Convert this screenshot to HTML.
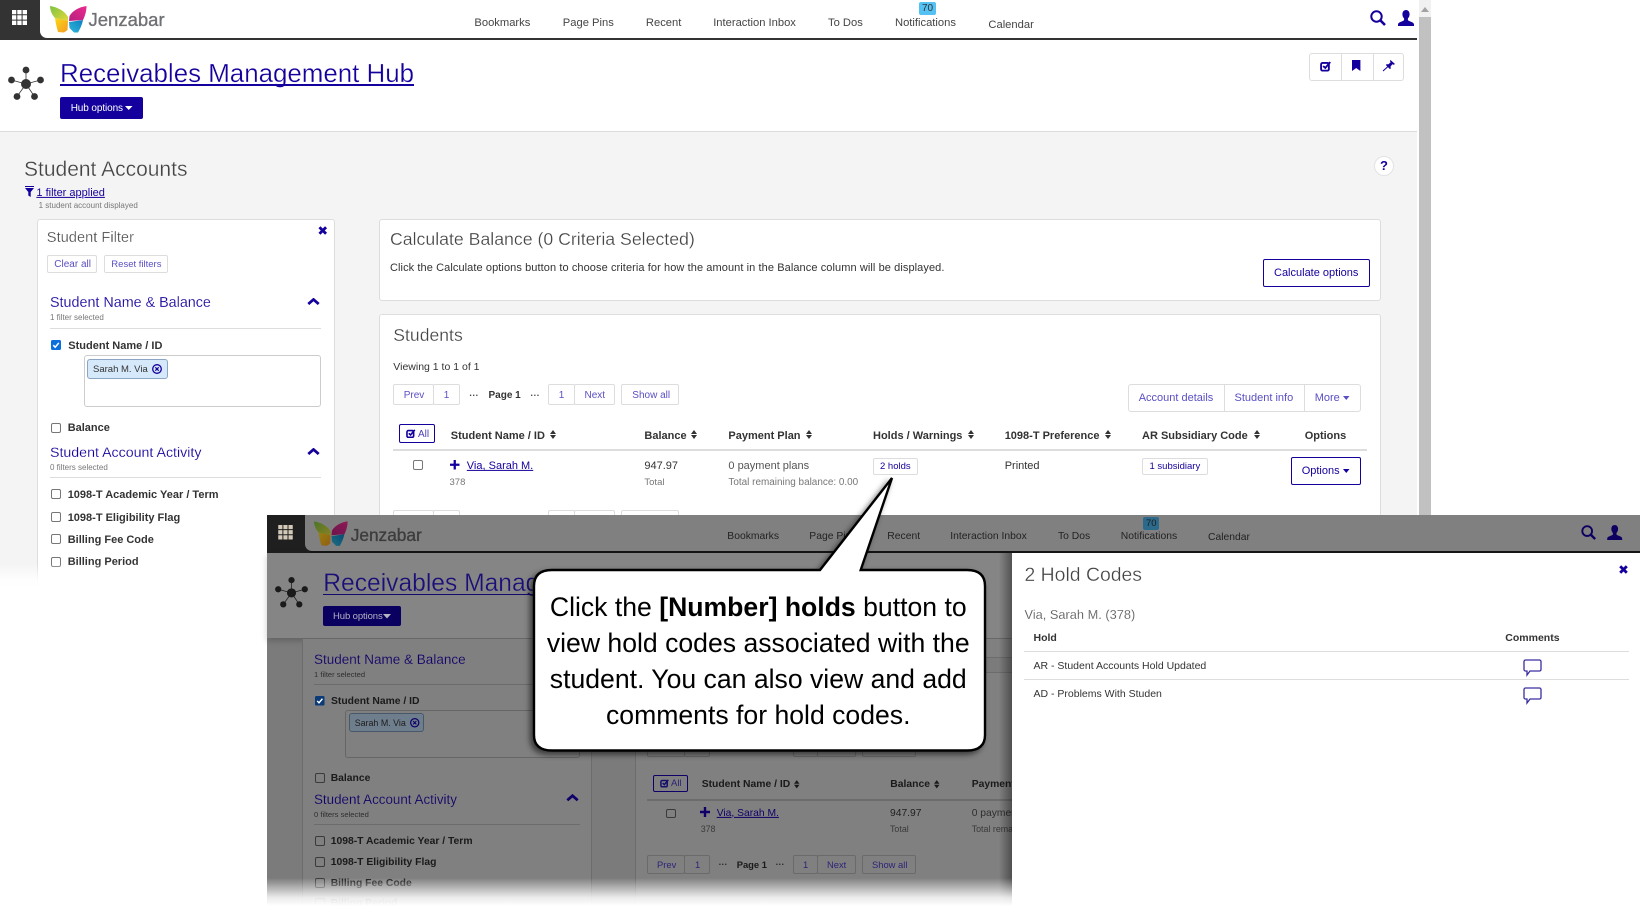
<!DOCTYPE html>
<html><head><meta charset="utf-8"><title>Receivables Management Hub</title>
<style>
html,body{margin:0;padding:0;background:#fff;width:1640px;height:910px;overflow:hidden;font-family:"Liberation Sans",sans-serif}
.t{position:absolute;white-space:nowrap;line-height:0;transform:translateY(.9px)}
.b{position:absolute;box-sizing:border-box}
svg.i{position:absolute;overflow:visible}
.nv{color:#14009c}
.li{color:#5a4fc4}
.bo{font-weight:bold;color:#333;font-size:11px}
.btn{background:#fff;border:1px solid #ddd;border-radius:2px}
.cb{width:10px;height:10px;background:#fff;border:1px solid #777;border-radius:2px}
.d .cb{background:#808080;border-color:#3a3a3a}
.d .btn{background:#808080;border:1px solid #6a6a6a}
.d .bo{color:#1a1a1a;font-size:10.35px}
.d .li{color:#2d2478}
.d .nv{color:#0e0068}
</style></head>
<body>
<svg width="0" height="0" style="position:absolute">
<defs>
<symbol id="grid" viewBox="0 0 15 15"><path d="M0 0h4.300v4.300H0zM5.300 0h4.300v4.300H5.300zM10.600 0h4.400v4.300h-4.400zM0 5.300h4.300v4.300H0zM5.300 5.300h4.300v4.300H5.300zM10.600 5.300h4.400v4.300h-4.400zM0 10.600h4.300V15H0zM5.300 10.600h4.300V15H5.300zM10.600 10.600h4.400V15h-4.400z" fill="currentColor"/></symbol>
<linearGradient id="g1" x1="0" y1="0" x2="1" y2="1"><stop offset="0" stop-color="#7cc242"/><stop offset="1" stop-color="#e3d93a"/></linearGradient>
<linearGradient id="g2" x1="0" y1="0" x2="1" y2="1"><stop offset="0" stop-color="#fbd817"/><stop offset="1" stop-color="#f59a23"/></linearGradient>
<linearGradient id="g3" x1="1" y1="0" x2="0" y2="1"><stop offset="0" stop-color="#ec2a8f"/><stop offset="1" stop-color="#b5207f"/></linearGradient>
<linearGradient id="g4" x1="1" y1="0" x2="0" y2="1"><stop offset="0" stop-color="#0d7fc2"/><stop offset="1" stop-color="#30b7d8"/></linearGradient>
<symbol id="logo" viewBox="0 0 38 27">
<path d="M0 0C7 1 15 5 18 11L18 15L5 12C2 9 0 4 0 0Z" fill="url(#g1)"/>
<path d="M5 12L18 15L17.500 24L14 26.500L8 26C6.500 21 5.500 16 5 12Z" fill="url(#g2)"/>
<path d="M36.500 0C36.500 5 35 10 33 14L19 15L19.500 10C23 4 30 1 36.500 0Z" fill="url(#g3)"/>
<path d="M19 16L33 14C32 19 30 23 28 26.500L24 26.500L19.500 22Z" fill="url(#g4)"/>
</symbol>
<symbol id="hub" viewBox="0 0 36 34">
<g stroke="currentColor" stroke-width=".8" fill="none"><path d="M18 18V4M18 18L3.500 14M18 18L32.500 14M18 18L9 30.500M18 18L26.500 30.500"/></g>
<g fill="currentColor"><circle cx="18" cy="18" r="5"/><circle cx="18" cy="4" r="3.400"/><circle cx="3.500" cy="14" r="3.400"/><circle cx="32.500" cy="14" r="3.400"/><circle cx="9" cy="30.500" r="3.400"/><circle cx="26.500" cy="30.500" r="3.400"/></g>
</symbol>
<symbol id="search" viewBox="0 0 16 16"><circle cx="6.500" cy="6.500" r="5.200" fill="none" stroke="currentColor" stroke-width="2"/><path d="M10.300 10.300L15 15" stroke="currentColor" stroke-width="2.600" fill="none"/></symbol>
<symbol id="user" viewBox="0 0 16 16"><path d="M8 0c2.300 0 3.600 1.900 3.600 4.300 0 1.800-.8 3.300-1.700 4.200v1.400c0 .7 1.200 1.100 2.700 1.700 1.700.7 3.400 1.300 3.400 3v1.400H0v-1.400c0-1.700 1.700-2.300 3.400-3 1.500-.6 2.700-1 2.700-1.700V8.500c-.9-.9-1.700-2.400-1.700-4.200C4.400 1.900 5.700 0 8 0z" fill="currentColor"/></symbol>
<symbol id="sort" viewBox="0 0 6 9"><path d="M3 0L6 4H0ZM3 9L0 5H6Z" fill="currentColor"/></symbol>
<symbol id="chev" viewBox="0 0 13 7"><path d="M1.300 6L6.500 1.500L11.700 6" fill="none" stroke="currentColor" stroke-width="2.800"/></symbol>
<symbol id="x" viewBox="0 0 9 9"><path d="M1.200 1.200L7.800 7.800M7.800 1.200L1.200 7.800" fill="none" stroke="currentColor" stroke-width="2.800"/></symbol>
<symbol id="plus" viewBox="0 0 10 10"><path d="M5 0V10M0 5H10" stroke="currentColor" stroke-width="2.400" fill="none"/></symbol>
<symbol id="chk" viewBox="0 0 10 10"><rect x=".8" y="1.800" width="7.400" height="7.400" rx="1.500" fill="none" stroke="currentColor" stroke-width="1.800"/><path d="M2.800 4.800L4.800 6.600L9.500 1" fill="none" stroke="currentColor" stroke-width="1.800"/></symbol>
<symbol id="cic" viewBox="0 0 10 10"><circle cx="5" cy="5" r="4.300" fill="none" stroke="currentColor" stroke-width="1.300"/><path d="M3.300 3.300L6.700 6.700M6.700 3.300L3.300 6.700" stroke="currentColor" stroke-width="1.200"/></symbol>
<symbol id="tick" viewBox="0 0 10 10"><rect width="10" height="10" rx="1.500" fill="currentColor"/><path d="M2.300 5.200L4.200 7.200L7.800 2.900" stroke="#fff" stroke-width="1.500" fill="none"/></symbol>
</defs>
</svg>

<!-- BASE PAGE -->
<div class="b" style="left:0;top:0;width:1417px;height:600px;background:#f4f4f4"></div>
<div class="b" style="left:0;top:40px;width:1417px;height:92px;background:#fff;border-bottom:1px solid #dcdcdc"></div>
<div class="b" style="left:0;top:0;width:1417px;height:40px;background:#333"></div>
<div class="b" style="left:40px;top:0;width:1377px;height:38px;background:#fff;border-bottom-left-radius:7px"></div>
<svg class="i" style="left:12px;top:10px;color:#fff" width="15" height="15"><use href="#grid"/></svg>
<svg class="i" style="left:50px;top:6px" width="38" height="27"><use href="#logo"/></svg>
<span class="t" style="left:88.500px;top:19px;font-size:18.500px;color:#6f7073;-webkit-text-stroke:.35px #6f7073">Jenzabar</span>
<span class="t" style="left:474.400px;top:22px;font-size:11.200px;color:#444">Bookmarks</span>
<span class="t" style="left:562.800px;top:22px;font-size:11.200px;color:#444">Page Pins</span>
<span class="t" style="left:645.900px;top:22px;font-size:11.200px;color:#444">Recent</span>
<span class="t" style="left:713.200px;top:22px;font-size:11.200px;color:#444">Interaction Inbox</span>
<span class="t" style="left:828px;top:22px;font-size:11.200px;color:#444">To Dos</span>
<span class="t" style="left:895px;top:22px;font-size:11.200px;color:#444">Notifications</span>
<span class="t" style="left:988.400px;top:24px;font-size:11.200px;color:#444">Calendar</span>
<div class="b" style="left:919px;top:2px;width:17px;height:13px;background:#55c1f2;border-radius:2px"></div>
<span class="t" style="left:922px;top:8px;font-size:10px;color:#333">70</span>
<svg class="i nv" style="left:1370px;top:10px" width="16" height="16"><use href="#search"/></svg>
<svg class="i nv" style="left:1398px;top:10px" width="16" height="16"><use href="#user"/></svg>
<!-- scrollbar -->
<div class="b" style="left:1417px;top:0;width:2px;height:515px;background:#fff"></div>
<div class="b" style="left:1419px;top:0;width:12px;height:515px;background:#c1c1c1"></div>
<div class="b" style="left:1419px;top:0;width:12px;height:17px;background:#f1f1f1"></div>
<svg class="i" style="left:1421px;top:7px" width="8" height="5"><path d="M4 0L8 5H0Z" fill="#a3a3a3"/></svg>

<svg class="i" style="left:8px;top:66px;color:#333" width="36" height="34"><use href="#hub"/></svg>
<span class="t nv" style="left:60px;top:73px;font-size:25.900px;-webkit-text-stroke:.3px #fff">Receivables Management Hub</span>
<div class="b" style="left:60px;top:84.300px;width:353.600px;height:1.500px;background:#14009c"></div>
<div class="b" style="left:60px;top:97px;width:83px;height:22px;background:#14009c;border-radius:2px"></div>
<span class="t" style="left:70.700px;top:108px;font-size:10px;color:#fff;letter-spacing:-.1px">Hub options</span>
<svg class="i" style="left:125px;top:105.500px" width="7.500" height="4"><path d="M0 0H7.500L3.750 4Z" fill="#fff"/></svg>
<!-- action group -->
<div class="b" style="left:1309.400px;top:53px;width:94.200px;height:28px;background:#fff;border:1px solid #ddd;border-radius:3px"></div>
<div class="b" style="left:1340.800px;top:53px;width:1px;height:28px;background:#ddd"></div>
<div class="b" style="left:1372.600px;top:53px;width:1px;height:28px;background:#ddd"></div>
<svg class="i nv" style="left:1319.500px;top:61px" width="11" height="10.500"><use href="#chk"/></svg>
<svg class="i nv" style="left:1352.300px;top:60px" width="8.400" height="11"><path d="M0 0H8.400V11L4.200 8L0 11Z" fill="currentColor"/></svg>
<svg class="i nv" style="left:1382.500px;top:60.300px" width="12" height="11"><path d="M7.500 0L12 4L10.800 4.800L9.500 4.200L7.500 6.500L7.800 8.500L6.800 9L2.800 5L3.500 4.200L5.500 4.300L7.600 2.200L6.900 1Z" fill="currentColor"/><path d="M0 11L5 6.500" stroke="currentColor" stroke-width="1" fill="none"/></svg>

<span class="t" style="left:24px;top:168.700px;font-size:21px;color:#444;-webkit-text-stroke:.3px #f4f4f4">Student Accounts</span>
<svg class="i nv" style="left:25px;top:186px" width="9" height="11"><path d="M0 0H9V1H0ZM0 2H9L5.700 6V11L3.300 9.500V6Z" fill="currentColor"/></svg>
<span class="t nv" style="left:36.400px;top:192px;font-size:11px;text-decoration:underline">1 filter applied</span>
<span class="t" style="left:38.600px;top:205px;font-size:8px;color:#777">1 student account displayed</span>
<div class="b" style="left:1373.500px;top:156px;width:20px;height:20px;background:#fff;border:1px solid #e3e3e3;border-radius:50%"></div>
<span class="t nv" style="left:1380px;top:165px;font-size:13px;font-weight:bold">?</span>

<!-- Student filter card -->
<div class="b" style="left:36.500px;top:218.700px;width:298px;height:380px;background:#fff;border:1px solid #ddd;border-radius:3px"></div>
<span class="t" style="left:46.800px;top:237px;font-size:14.660px;color:#444;-webkit-text-stroke:.25px #fff">Student Filter</span>
<svg class="i nv" style="left:317.500px;top:226px" width="9.500" height="9"><use href="#x"/></svg>
<div class="b btn" style="left:47px;top:255.300px;width:50px;height:17.500px"></div>
<span class="t li" style="left:54.300px;top:264px;font-size:10px">Clear all</span>
<div class="b btn" style="left:104px;top:255.300px;width:64px;height:17.500px"></div>
<span class="t li" style="left:111.300px;top:264px;font-size:9.500px">Reset filters</span>

<span class="t nv" style="left:50px;top:302px;font-size:14.340px;-webkit-text-stroke:.15px #fff">Student Name &amp; Balance</span>
<svg class="i nv" style="left:306.700px;top:298px" width="13" height="7"><use href="#chev"/></svg>
<span class="t" style="left:50px;top:317px;font-size:8px;color:#777">1 filter selected</span>
<div class="b" style="left:50px;top:328px;width:271px;height:1px;background:#ddd"></div>
<svg class="i" style="left:51px;top:340px;color:#0b6fdc" width="10" height="10"><use href="#tick"/></svg>
<span class="t bo" style="left:68.300px;top:345px">Student Name / ID</span>
<div class="b" style="left:84.300px;top:355.300px;width:236.400px;height:51.400px;background:#fff;border:1px solid #ccc;border-radius:3px"></div>
<div class="b" style="left:87.300px;top:359.300px;width:80.400px;height:19.400px;background:#d6e9fa;border:1px solid #8aa6c4;border-radius:3px"></div>
<span class="t" style="left:93px;top:368.500px;font-size:9.500px;color:#333">Sarah M. Via</span>
<svg class="i nv" style="left:152px;top:363.500px" width="10" height="10"><use href="#cic"/></svg>
<div class="b cb" style="left:51px;top:423px"></div>
<span class="t bo" style="left:67.700px;top:427px">Balance</span>
<span class="t nv" style="left:50px;top:452px;font-size:14.200px;-webkit-text-stroke:.15px #fff">Student Account Activity</span>
<svg class="i nv" style="left:306.700px;top:448px" width="13" height="7"><use href="#chev"/></svg>
<span class="t" style="left:50px;top:467.300px;font-size:8px;color:#777">0 filters selected</span>
<div class="b" style="left:50px;top:477px;width:271px;height:1px;background:#ddd"></div>
<div class="b cb" style="left:51px;top:489px"></div><span class="t bo" style="left:67.700px;top:494px">1098-T Academic Year / Term</span>
<div class="b cb" style="left:51px;top:512px"></div><span class="t bo" style="left:67.700px;top:517px">1098-T Eligibility Flag</span>
<div class="b cb" style="left:51px;top:534px"></div><span class="t bo" style="left:67.700px;top:539px">Billing Fee Code</span>
<div class="b cb" style="left:51px;top:556.500px"></div><span class="t bo" style="left:67.700px;top:561px">Billing Period</span>

<!-- Calculate card -->
<div class="b" style="left:379px;top:218.700px;width:1002px;height:82.300px;background:#fff;border:1px solid #ddd;border-radius:3px"></div>
<span class="t" style="left:390px;top:238px;font-size:17.700px;color:#444;-webkit-text-stroke:.25px #fff">Calculate Balance (0 Criteria Selected)</span>
<span class="t" style="left:390px;top:267.300px;font-size:11px;letter-spacing:.086px;color:#333">Click the Calculate options button to choose criteria for how the amount in the Balance column will be displayed.</span>
<div class="b" style="left:1263px;top:259.300px;width:107px;height:27.400px;background:#fff;border:1.500px solid #14009c;border-radius:2px"></div>
<span class="t nv" style="left:1274px;top:271.600px;font-size:11px">Calculate options</span>

<!-- Students card -->
<div class="b" style="left:379px;top:314px;width:1002px;height:260px;background:#fff;border:1px solid #ddd;border-radius:3px"></div>
<span class="t" style="left:393.300px;top:334px;font-size:17.600px;color:#444;-webkit-text-stroke:.25px #fff">Students</span>
<span class="t" style="left:393.300px;top:366.300px;font-size:10.500px;color:#333">Viewing 1 to 1 of 1</span>
<div class="b btn" style="left:393px;top:384px;width:41px;height:21px"></div><span class="t li" style="left:403.700px;top:395px;font-size:10px">Prev</span>
<div class="b btn" style="left:433px;top:384px;width:27px;height:21px"></div><span class="t li" style="left:443.700px;top:395px;font-size:10px">1</span>
<span class="t" style="left:469.600px;top:395px;font-size:5.500px;color:#333;letter-spacing:1.200px">•••</span>
<span class="t" style="left:488.500px;top:395px;font-size:10px;font-weight:bold;color:#333">Page 1</span>
<span class="t" style="left:530.700px;top:395px;font-size:5.500px;color:#333;letter-spacing:1.200px">•••</span>
<div class="b btn" style="left:548px;top:384px;width:27px;height:21px"></div><span class="t li" style="left:558.800px;top:395px;font-size:10px">1</span>
<div class="b btn" style="left:574px;top:384px;width:41px;height:21px"></div><span class="t li" style="left:584.500px;top:395px;font-size:10px">Next</span>
<div class="b btn" style="left:621px;top:384px;width:58px;height:21px"></div><span class="t li" style="left:632.300px;top:395px;font-size:10px">Show all</span>

<div class="b btn" style="left:1128px;top:384px;width:97px;height:27.700px;border-radius:3px 0 0 3px"></div>
<div class="b btn" style="left:1224px;top:384px;width:81px;height:27.700px;border-radius:0"></div>
<div class="b btn" style="left:1304px;top:384px;width:57px;height:27.700px;border-radius:0 3px 3px 0"></div>
<span class="t li" style="left:1138.700px;top:396.500px;font-size:11px">Account details</span>
<span class="t li" style="left:1234.500px;top:396.500px;font-size:11px">Student info</span>
<span class="t li" style="left:1314.700px;top:396.500px;font-size:11px">More</span>
<svg class="i" style="left:1343px;top:395.500px" width="6.500" height="4"><path d="M0 0H6.500L3.250 4Z" fill="#5a4fc4"/></svg>

<div class="b" style="left:399.300px;top:424.300px;width:36.200px;height:18.400px;background:#fff;border:1.500px solid #14009c;border-radius:2px"></div>
<svg class="i nv" style="left:406px;top:429px" width="9.500" height="9"><use href="#chk"/></svg>
<span class="t" style="left:418px;top:433.500px;font-size:10px;color:#4a3fb4">All</span>
<span class="t bo" style="left:450.800px;top:435.300px">Student Name / ID</span><svg class="i" style="left:549.600px;top:430px;color:#333" width="6" height="9"><use href="#sort"/></svg>
<span class="t bo" style="left:644.400px;top:435.300px">Balance</span><svg class="i" style="left:691.400px;top:430px;color:#333" width="6" height="9"><use href="#sort"/></svg>
<span class="t bo" style="left:728.400px;top:435.300px">Payment Plan</span><svg class="i" style="left:806px;top:430px;color:#333" width="6" height="9"><use href="#sort"/></svg>
<span class="t bo" style="left:873px;top:435.300px">Holds / Warnings</span><svg class="i" style="left:968px;top:430px;color:#333" width="6" height="9"><use href="#sort"/></svg>
<span class="t bo" style="left:1004.700px;top:435.300px">1098-T Preference</span><svg class="i" style="left:1105px;top:430px;color:#333" width="6" height="9"><use href="#sort"/></svg>
<span class="t bo" style="left:1142px;top:435.300px">AR Subsidiary Code</span><svg class="i" style="left:1253.600px;top:430px;color:#333" width="6" height="9"><use href="#sort"/></svg>
<span class="t bo" style="left:1304.700px;top:435.300px">Options</span>
<div class="b" style="left:393.300px;top:449px;width:973.500px;height:2px;background:#ddd"></div>

<div class="b cb" style="left:413px;top:460px"></div>
<svg class="i nv" style="left:449.500px;top:459.500px" width="9.500" height="9.500"><use href="#plus"/></svg>
<span class="t nv" style="left:466.800px;top:465.300px;font-size:11px;text-decoration:underline">Via, Sarah M.</span>
<span class="t" style="left:449.500px;top:481.700px;font-size:9.500px;color:#777">378</span>
<span class="t" style="left:644.400px;top:465.300px;font-size:11px;color:#333">947.97</span>
<span class="t" style="left:644.400px;top:481.700px;font-size:9.500px;color:#777">Total</span>
<span class="t" style="left:728.400px;top:465.300px;font-size:11px;color:#555">0 payment plans</span>
<span class="t" style="left:728.400px;top:481.700px;font-size:9.950px;color:#777">Total remaining balance: 0.00</span>
<div class="b btn" style="left:873px;top:457.700px;width:44.600px;height:17px"></div>
<span class="t nv" style="left:880px;top:465.500px;font-size:9.500px">2 holds</span>
<span class="t" style="left:1004.700px;top:465.300px;font-size:11px;color:#333">Printed</span>
<div class="b btn" style="left:1142px;top:457.700px;width:66px;height:17px"></div>
<span class="t nv" style="left:1149.500px;top:465.500px;font-size:9.500px">1 subsidiary</span>
<div class="b" style="left:1291.300px;top:457.300px;width:69.400px;height:27.400px;background:#fff;border:1.500px solid #14009c;border-radius:2px"></div>
<span class="t nv" style="left:1301.700px;top:470.300px;font-size:11px">Options</span>
<svg class="i nv" style="left:1343px;top:468.500px" width="6.500" height="4"><path d="M0 0H6.500L3.250 4Z" fill="currentColor"/></svg>
<div class="b btn" style="left:393px;top:509.700px;width:41px;height:21px"></div>
<div class="b btn" style="left:433px;top:509.700px;width:27px;height:21px"></div>
<div class="b btn" style="left:548px;top:509.700px;width:27px;height:21px"></div>
<div class="b btn" style="left:574px;top:509.700px;width:41px;height:21px"></div>
<div class="b btn" style="left:621px;top:509.700px;width:58px;height:21px"></div>

<!-- fade base page -->
<div class="b" style="left:0;top:563px;width:267px;height:30px;background:linear-gradient(to bottom,rgba(255,255,255,0),rgba(255,255,255,.95) 60%,#fff)"></div>
<div class="b" style="left:0;top:593px;width:267px;height:317px;background:#fff"></div>
<div class="b" style="left:267px;top:515px;width:1373px;height:395px;background:#fff"></div>

<!-- DARK OVERLAY SCREENSHOT -->
<div class="d">
<div class="b" style="left:267px;top:515px;width:745px;height:395px;background:#7b7b7b"></div>
<div class="b" style="left:267px;top:515px;width:48px;height:38px;background:#1f1f1f"></div>
<div class="b" style="left:305px;top:515px;width:1335px;height:36.300px;background:#808080;border-bottom-left-radius:7px"></div>
<div class="b" style="left:310px;top:551.300px;width:1330px;height:1.800px;background:#151515"></div>
<svg class="i" style="left:278px;top:525px;color:#d2c9b8" width="15" height="14.500"><use href="#grid"/></svg>
<svg class="i" style="left:314px;top:521px;filter:brightness(.6)" width="35" height="25.700"><use href="#logo"/></svg>
<span class="t" style="left:350.700px;top:533.500px;font-size:17.300px;color:#3d3d3d;-webkit-text-stroke:.35px #3d3d3d">Jenzabar</span>
<span class="t" style="left:727.300px;top:535.500px;font-size:10.350px;color:#222">Bookmarks</span>
<span class="t" style="left:809.300px;top:535.500px;font-size:10.350px;color:#222">Page Pins</span>
<span class="t" style="left:887.300px;top:535.500px;font-size:10.350px;color:#222">Recent</span>
<span class="t" style="left:950.300px;top:535.500px;font-size:10.350px;color:#222">Interaction Inbox</span>
<span class="t" style="left:1058px;top:535.500px;font-size:10.350px;color:#222">To Dos</span>
<span class="t" style="left:1120.800px;top:535.500px;font-size:10.350px;color:#222">Notifications</span>
<span class="t" style="left:1208px;top:536.800px;font-size:10.350px;color:#222">Calendar</span>
<div class="b" style="left:1142.900px;top:517.300px;width:16.100px;height:12.700px;background:#2c6a8c;border-radius:2px"></div>
<span class="t" style="left:1146px;top:523px;font-size:9.500px;color:#1c1c1c">70</span>
<svg class="i" style="left:1580.800px;top:525px;color:#0d0060" width="15.200" height="15"><use href="#search"/></svg>
<svg class="i" style="left:1607px;top:525px;color:#0d0060" width="15.400" height="15"><use href="#user"/></svg>

<div class="b" style="left:267px;top:553px;width:745px;height:85px;background:#858585;box-shadow:0 3px 6px rgba(0,0,0,.2)"></div>
<svg class="i" style="left:274.700px;top:576px;color:#1a1a1a" width="33" height="32"><use href="#hub"/></svg>
<span class="t nv" style="left:323.300px;top:583px;font-size:24.600px;color:#1a0f78;-webkit-text-stroke:.3px #858585">Receivables Management Hub</span>
<div class="b" style="left:323.300px;top:593.800px;width:300px;height:1.500px;background:#120a6c"></div>
<div class="b" style="left:323px;top:606px;width:78px;height:20px;background:#0a0060;border-radius:2px"></div>
<span class="t" style="left:333px;top:616px;font-size:9.500px;color:#b4b4c4;letter-spacing:-.1px">Hub options</span>
<svg class="i" style="left:383px;top:614px" width="8" height="4.500"><path d="M0 0H8L4 4.500Z" fill="#b4b4c4"/></svg>

<div class="b" style="left:301.700px;top:639px;width:290.600px;height:271px;background:#808080;border-left:1px solid #6c6c6c;border-right:1px solid #6c6c6c"></div>
<span class="t nv" style="left:314px;top:659px;font-size:13.500px;-webkit-text-stroke:.15px #808080">Student Name &amp; Balance</span>
<span class="t" style="left:314px;top:674px;font-size:7.600px;color:#2e2e2e">1 filter selected</span>
<div class="b" style="left:314px;top:684px;width:266px;height:1px;background:#6c6c6c"></div>
<svg class="i" style="left:315px;top:695.500px;color:#0a3b78" width="9.500" height="9.500"><use href="#tick"/></svg>
<span class="t bo" style="left:331px;top:700.500px">Student Name / ID</span>
<div class="b" style="left:345px;top:710.300px;width:235px;height:47.400px;border:1px solid #666;border-radius:3px"></div>
<div class="b" style="left:349.300px;top:713px;width:74.400px;height:19px;background:#6f7e8c;border:1px solid #47586a;border-radius:3px"></div>
<span class="t" style="left:354.700px;top:722.300px;font-size:8.900px;color:#1c1c1c">Sarah M. Via</span>
<svg class="i nv" style="left:410px;top:717.500px" width="9.500" height="9.500"><use href="#cic"/></svg>
<div class="b cb" style="left:315px;top:773px"></div>
<span class="t bo" style="left:330.700px;top:777.500px">Balance</span>
<span class="t nv" style="left:314px;top:799.300px;font-size:13.400px;-webkit-text-stroke:.15px #808080">Student Account Activity</span>
<svg class="i nv" style="left:566px;top:794px" width="13" height="7.500"><use href="#chev"/></svg>
<span class="t" style="left:314px;top:814px;font-size:7.600px;color:#2e2e2e">0 filters selected</span>
<div class="b" style="left:314px;top:824px;width:266px;height:1px;background:#6c6c6c"></div>
<div class="b cb" style="left:315px;top:835.500px"></div><span class="t bo" style="left:330.700px;top:840.700px">1098-T Academic Year / Term</span>
<div class="b cb" style="left:315px;top:857px"></div><span class="t bo" style="left:330.700px;top:862px">1098-T Eligibility Flag</span>
<div class="b cb" style="left:315px;top:877.500px"></div><span class="t bo" style="left:330.700px;top:882.700px">Billing Fee Code</span>
<div class="b cb" style="left:315px;top:898px"></div><span class="t bo" style="left:330.700px;top:903.400px">Billing Period</span>

<div class="b" style="left:634.700px;top:672px;width:380px;height:238px;background:#808080;border-left:1px solid #6c6c6c;border-top:1px solid #6c6c6c"></div>
<div class="b" style="left:634.700px;top:639px;width:380px;height:19px;background:#808080;border-left:1px solid #6c6c6c;border-bottom:1px solid #6c6c6c"></div>
<div class="b btn" style="left:647px;top:737px;width:38px;height:20px"></div>
<div class="b btn" style="left:684px;top:737px;width:26px;height:20px"></div>
<div class="b btn" style="left:793px;top:737px;width:25px;height:20px"></div>
<div class="b btn" style="left:817px;top:737px;width:39px;height:20px"></div>
<div class="b btn" style="left:862px;top:737px;width:54px;height:20px"></div>

<div class="b" style="left:653.300px;top:775px;width:34.400px;height:16.700px;border:1.200px solid #0e0068;border-radius:2px"></div>
<svg class="i" style="left:660px;top:779px;color:#17106a" width="9" height="8.500"><use href="#chk"/></svg>
<span class="t li" style="left:671px;top:782.500px;font-size:9.500px">All</span>
<span class="t bo" style="left:701.700px;top:784px">Student Name / ID</span><svg class="i" style="left:794px;top:779.500px;color:#1a1a1a" width="5.500" height="8.500"><use href="#sort"/></svg>
<span class="t bo" style="left:890.300px;top:784px">Balance</span><svg class="i" style="left:934px;top:779.500px;color:#1a1a1a" width="5.500" height="8.500"><use href="#sort"/></svg>
<span class="t bo" style="left:971.700px;top:784px">Payment Plan</span>
<div class="b" style="left:647px;top:798.500px;width:370px;height:2px;background:#6c6c6c"></div>
<div class="b cb" style="left:666.300px;top:808.500px;width:9.500px;height:9.500px"></div>
<svg class="i nv" style="left:700px;top:807px" width="10" height="10"><use href="#plus"/></svg>
<span class="t nv" style="left:716.700px;top:812.500px;font-size:10.300px;text-decoration:underline">Via, Sarah M.</span>
<span class="t" style="left:700.700px;top:828px;font-size:8.900px;color:#3a3a3a">378</span>
<span class="t" style="left:890px;top:812.500px;font-size:10.300px;color:#1e1e1e">947.97</span>
<span class="t" style="left:890px;top:828px;font-size:8.900px;color:#3a3a3a">Total</span>
<span class="t" style="left:971.700px;top:812.500px;font-size:10.300px;color:#2e2e2e">0 payment plans</span>
<span class="t" style="left:971.700px;top:828px;font-size:8.900px;color:#3a3a3a">Total remaining balance: 0.00</span>
<div class="b btn" style="left:647px;top:854.500px;width:38px;height:19.400px"></div><span class="t li" style="left:657px;top:864px;font-size:9.400px">Prev</span>
<div class="b btn" style="left:684px;top:854.500px;width:26px;height:19.400px"></div><span class="t li" style="left:695px;top:864px;font-size:9.400px">1</span>
<span class="t" style="left:719px;top:864px;font-size:5.200px;color:#1a1a1a;letter-spacing:1.100px">•••</span>
<span class="t" style="left:736.700px;top:864px;font-size:9.400px;font-weight:bold;color:#1a1a1a">Page 1</span>
<span class="t" style="left:776px;top:864px;font-size:5.200px;color:#1a1a1a;letter-spacing:1.100px">•••</span>
<div class="b btn" style="left:793px;top:854.500px;width:25px;height:19.400px"></div><span class="t li" style="left:803px;top:864px;font-size:9.400px">1</span>
<div class="b btn" style="left:817px;top:854.500px;width:39px;height:19.400px"></div><span class="t li" style="left:827px;top:864px;font-size:9.400px">Next</span>
<div class="b btn" style="left:862px;top:854.500px;width:54px;height:19.400px"></div><span class="t li" style="left:872px;top:864px;font-size:9.400px">Show all</span>

<div class="b" style="left:999px;top:553px;width:13px;height:357px;background:linear-gradient(to right,rgba(0,0,0,0),rgba(0,0,0,.38))"></div>
<div class="b" style="left:267px;top:878px;width:745px;height:28px;background:linear-gradient(to bottom,rgba(255,255,255,0),rgba(255,255,255,.85) 70%,#fff)"></div>
<div class="b" style="left:267px;top:906px;width:745px;height:4px;background:#fff"></div>
</div>

<!-- Right panel -->
<div class="b" style="left:1011.700px;top:553px;width:628.300px;height:357px;background:#fff"></div>
<span class="t" style="left:1024.500px;top:574.300px;font-size:19.400px;color:#444;-webkit-text-stroke:.3px #fff">2 Hold Codes</span>
<svg class="i nv" style="left:1619px;top:565px" width="9" height="9"><use href="#x"/></svg>
<span class="t" style="left:1024.500px;top:613.800px;font-size:12.800px;color:#555;-webkit-text-stroke:.15px #fff">Via, Sarah M. (378)</span>
<span class="t" style="left:1033.500px;top:637.300px;font-size:10.500px;font-weight:bold;color:#333">Hold</span>
<span class="t" style="left:1505.300px;top:637.300px;font-size:10.500px;font-weight:bold;color:#333">Comments</span>
<div class="b" style="left:1024px;top:651px;width:604.600px;height:1px;background:#ddd"></div>
<span class="t" style="left:1033.500px;top:665px;font-size:10.500px;color:#333">AR - Student Accounts Hold Updated</span>
<svg class="i" style="left:1523px;top:658.500px" width="19" height="17"><path d="M2.500 1h14a1.500 1.500 0 0 1 1.500 1.500v8a1.500 1.500 0 0 1-1.500 1.500H7L4 16v-4H2.500A1.500 1.500 0 0 1 1 10.500v-8A1.500 1.500 0 0 1 2.500 1z" fill="none" stroke="#3a2da0" stroke-width="1.300"/></svg>
<div class="b" style="left:1024px;top:679px;width:604.600px;height:1px;background:#ddd"></div>
<span class="t" style="left:1033.500px;top:693.300px;font-size:10.500px;color:#333">AD - Problems With Studen</span>
<svg class="i" style="left:1523px;top:686.500px" width="19" height="17"><path d="M2.500 1h14a1.500 1.500 0 0 1 1.500 1.500v8a1.500 1.500 0 0 1-1.500 1.500H7L4 16v-4H2.500A1.500 1.500 0 0 1 1 10.500v-8A1.500 1.500 0 0 1 2.500 1z" fill="none" stroke="#3a2da0" stroke-width="1.300"/></svg>

<!-- Callout -->
<svg class="i" style="left:0;top:0;filter:drop-shadow(-3px 3px 3px rgba(0,0,0,.55))" width="1640" height="910"><path d="M552 570H820L892 478L860.700 570H967Q985 570 985 586V735Q985 750.500 967 750.500H552Q534 750.500 534 735V586Q534 570 552 570Z" fill="#fff" stroke="#000" stroke-width="2.400"/></svg>
<div class="b" style="left:532.500px;top:589px;width:451.500px;text-align:center;font-size:26.600px;line-height:36px;color:#000">Click the <b>[Number] holds</b> button to<br>view hold codes associated with the<br>student. You can also view and add<br>comments for hold codes.</div>
</body></html>
